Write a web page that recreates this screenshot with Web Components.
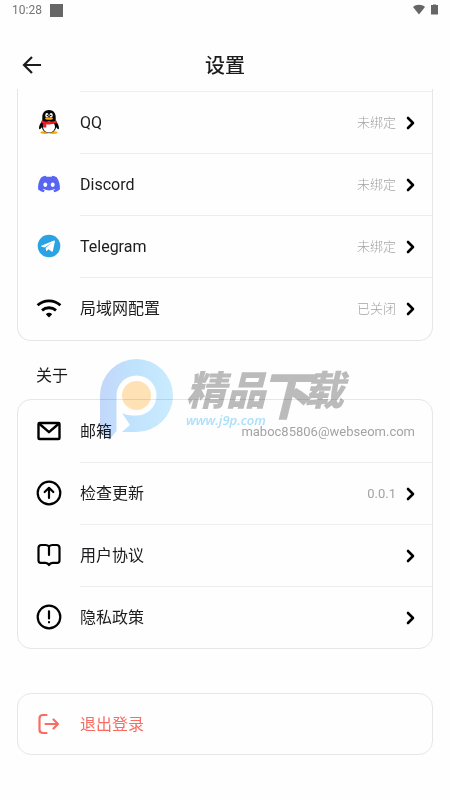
<!DOCTYPE html>
<html lang="zh-CN">
<head>
<meta charset="utf-8">
<meta name="viewport" content="width=device-width, initial-scale=1">
<title>设置</title>
<style>
  html { background: #fefefe; }
  body { margin: 0; color: #1c1c1e; font: 400 16px/24px Roboto, "Noto Sans CJK SC", sans-serif; }
</style>
</head>
<body>
<settings-app>
  <status-bar slot="status">10:28</status-bar>
  <page-header slot="header">设置</page-header>
  <settings-card joined>
    <settings-row icon="qq" value="未绑定">QQ</settings-row>
    <settings-row icon="discord" value="未绑定">Discord</settings-row>
    <settings-row icon="telegram" value="未绑定">Telegram</settings-row>
    <settings-row icon="wifi" value="已关闭">局域网配置</settings-row>
  </settings-card>
  <settings-card heading="关于">
    <settings-row icon="mail" value="maboc85806@webseom.com" readonly>邮箱</settings-row>
    <settings-row icon="update" value="0.0.1">检查更新</settings-row>
    <settings-row icon="book">用户协议</settings-row>
    <settings-row icon="notice">隐私政策</settings-row>
    <brand-stamp slot="overlay"></brand-stamp>
  </settings-card>
  <settings-card apart>
    <settings-row icon="logout" danger>退出登录</settings-row>
  </settings-card>
</settings-app>

<script>
const icons = {
  qq: `<svg viewBox="0 0 26 26">
    <ellipse cx="9" cy="23.6" rx="4.6" ry="1.4" fill="#f5a800"/><ellipse cx="17" cy="23.6" rx="4.6" ry="1.4" fill="#f5a800"/>
    <path d="M13 1C8.600 1 6.300 4.300 6.300 8v3.500C4.500 14 2.800 16.800 3 19.300c.2 1.900 1.500.8 2.700-1C6.700 22 9.300 24 13 24s6.300-2 7.300-5.700c1.200 1.800 2.500 2.900 2.700 1 .2-2.500-1.500-5.300-3.300-7.800V8C19.700 4.300 17.400 1 13 1z" fill="#050505"/>
    <ellipse cx="13" cy="18" rx="6" ry="5.600" fill="#fff"/>
    <ellipse cx="10.900" cy="6.200" rx="1.600" ry="2.300" fill="#fff"/><ellipse cx="15.100" cy="6.200" rx="1.600" ry="2.300" fill="#fff"/>
    <circle cx="11.400" cy="6.500" r=".8"/><circle cx="14.700" cy="6.500" r=".8"/>
    <ellipse cx="13" cy="9.500" rx="4" ry="1.300" fill="#f9aa10"/>
    <path d="M5.800 11.200c4 2.200 10.400 2.200 14.400 0l.6 2.600c-3.300 1.500-7 2-10.500 1.500v3.200H7.100v-4.200l-1.800-.6z" fill="#ed1c24"/>
  </svg>`,
  discord: `<svg viewBox="-2 -5 28 28"><path fill="#5865f2" d="M20.300 1.600A19 19 0 0 0 15.500 0l-.7 1.300a18 18 0 0 0-5.600 0L8.500 0a19 19 0 0 0-4.800 1.600C.7 6.100-.1 10.500.3 14.800a19 19 0 0 0 5.900 3l1.200-2-1.900-1 .5-.3a14 14 0 0 0 12 0l.5.300-1.900 1 1.200 2a19 19 0 0 0 5.900-3c.5-5-.9-9.400-3.400-13.200zM8 12.300c-1.200 0-2.100-1.100-2.100-2.400S6.800 7.500 8 7.500s2.200 1.100 2.100 2.400c0 1.300-.9 2.400-2.100 2.400zm8 0c-1.200 0-2.100-1.100-2.100-2.400s.9-2.400 2.100-2.400 2.200 1.100 2.100 2.400c0 1.300-.9 2.400-2.100 2.400z"/></svg>`,
  telegram: `<svg viewBox="0 0 26 26"><circle cx="13" cy="13" r="11.300" fill="#29a3e3"/><path fill="#fff" d="m5.300 12.700 12.600-5.200c.7-.2 1.100.2 1 .9l-2 9.500c-.2.800-.7 1-1.400.6l-3-2.300-1.600 1.600c-.5.500-.8.300-.9-.3l-.3-2.800L16 9.700l-7.500 4.800-3.100-1c-.7-.2-.7-.6-.1-.8z"/></svg>`,
  wifi: `<svg viewBox="0 0 26 26" fill="none" stroke="#000" stroke-width="2.800"><path d="M1.600 10.300a17 17 0 0 1 22.800 0M6 15.400a10.500 10.500 0 0 1 14 0"/><path d="M9.800 19.200a4.800 4.800 0 0 1 6.400 0L13 22.500z" fill="#000" stroke="none"/></svg>`,
  mail: `<svg viewBox="0 0 26 26" fill="none" stroke="#000" stroke-width="2.400" stroke-linejoin="round"><rect x="2.500" y="5" width="21" height="16" rx="1"/><path d="m3 5.500 10 8.700 10-8.700"/></svg>`,
  update: `<svg viewBox="0 0 26 26" fill="none" stroke="#000" stroke-width="2.200" stroke-linecap="round" stroke-linejoin="round"><circle cx="13" cy="13" r="11.300"/><path d="M13 18V8.500M8.700 12 13 7.800l4.300 4.200"/></svg>`,
  book: `<svg viewBox="0 0 26 26" fill="none" stroke="#000" stroke-width="2.200" stroke-linecap="round" stroke-linejoin="round"><path d="M13 4.500C12 3.300 11 3 9.500 3H5.500C3.500 3 2.500 4 2.500 6v12.500c0 1.500.8 2.300 2.300 2.300h4.700c1.700 0 2.800.8 3.500 2.200.7-1.400 1.800-2.200 3.500-2.200h4.700c1.500 0 2.300-.8 2.300-2.300V6c0-2-1-3-3-3h-4c-1.500 0-2.500.3-3.500 1.500V13"/></svg>`,
  notice: `<svg viewBox="0 0 26 26" fill="none" stroke="#000" stroke-width="2.200" stroke-linecap="round"><circle cx="13" cy="13" r="11.300"/><path d="M13 7.300v7.200M13 18.200v.1"/></svg>`,
  logout: `<svg viewBox="0 0 26 26" fill="none" stroke="#f86c63" stroke-width="2.200" stroke-linecap="round" stroke-linejoin="round"><path d="M10.500 4H7C4.500 4 3.500 5 3.500 7.500v11C3.500 21 4.500 22 7 22h3.500M9.500 13H22M17.500 8.500 22 13l-4.500 4.500"/></svg>`
};

class SettingsApp extends HTMLElement {
  constructor() {
    super();
    this.attachShadow({ mode: 'open' }).innerHTML = `
      <style>
        :host { display: flex; flex-direction: column; min-height: 100vh; }
        main { padding: 0 17px 44px; }
      </style>
      <slot name="status"></slot><slot name="header"></slot><main><slot></slot></main>`;
  }
}

class StatusBar extends HTMLElement {
  constructor() {
    super();
    this.attachShadow({ mode: 'open' }).innerHTML = `
      <style>
        :host { display: flex; align-items: center; gap: 5px; height: 20px; padding: 0 12px; color: #757575; font-size: 12px; line-height: 20px; }
        i { width: 13px; height: 13px; margin-left: 3px; background: #666; }
        svg { display: block; height: 12px; }
        .wifi { width: 14px; margin-left: auto; }
        .battery { width: 7px; }
      </style>
      <slot></slot><i></i>
      <svg class="wifi" viewBox="0 0 14 12"><path fill="#666" d="M1 3C4 0 10 0 13 3L7 10.500z"/></svg>
      <svg class="battery" viewBox="0 0 7 12"><path fill="#aaa" d="M2 0h3v2H2z"/><path fill="#666" d="M0 1h7v9.500H0z"/></svg>`;
  }
}

class PageHeader extends HTMLElement {
  constructor() {
    super();
    this.attachShadow({ mode: 'open' }).innerHTML = `
      <style>
        :host { display: block; padding-top: 21px; }
        header { display: grid; grid-template-columns: 48px 1fr 48px; align-items: center; height: 48px; padding: 0 8px; }
        button { display: grid; place-items: center; height: 48px; padding: 0; border: 0; background: none; cursor: pointer; }
        svg { width: 24px; height: 24px; }
        h1 { margin: 0; padding-top: 2px; text-align: center; font-size: 20px; line-height: 28px; font-weight: 500; }
      </style>
      <header>
        <button type="button" aria-label="返回"><svg viewBox="0 0 24 24" fill="none" stroke="#1c1c1e" stroke-width="2.200"><path d="M21 12H4.500M12 4l-8 8 8 8"/></svg></button>
        <h1><slot></slot></h1>
      </header>`;
  }
}

class SettingsCard extends HTMLElement {
  constructor() {
    super();
    this.attachShadow({ mode: 'open' }).innerHTML = `
      <style>
        :host { display: block; position: relative; }
        :host([apart]) { margin-top: 44px; }
        h2 { margin: 0; padding: 23px 19px 11px; font-size: 16px; line-height: 24px; font-weight: 400; }
        .box { border: 1px solid #e6e6e6; border-radius: 14px; overflow: hidden; }
        :host([joined]) .box { border-top: 0; border-radius: 0 0 14px 14px; padding: 2px 0 1px; }
        :host([joined]) { --first-line: #eee; }
      </style>
      ${this.hasAttribute('heading') ? `<h2>${this.getAttribute('heading')}</h2>` : ''}
      <div class="box"><slot></slot></div><slot name="overlay"></slot>`;
  }
}

class SettingsRow extends HTMLElement {
  constructor() {
    super();
    const readonly = this.hasAttribute('readonly');
    const tag = readonly ? 'div' : 'button type="button"';
    const value = this.getAttribute('value');
    const arrow = !readonly && !this.hasAttribute('danger');
    this.attachShadow({ mode: 'open' }).innerHTML = `
      <style>
        :host { display: block; --line: #eee; --height: 62px; }
        :host(:first-child) { --line: var(--first-line, transparent); }
        .row { display: flex; align-items: center; gap: 18px; box-sizing: border-box; width: 100%; min-height: var(--height); padding: 0 0 0 18px; border: 0; background: none; color: inherit; font: inherit; text-align: left; }
        button { cursor: pointer; }
        .icon svg { display: block; width: 26px; height: 26px; }
        .body { flex: 1; display: flex; align-items: center; gap: 9px; box-sizing: border-box; min-height: var(--height); padding-right: 17px; border-top: 1px solid var(--line); }
        .label { flex: 1; }
        .value { color: #a3a3a3; font-size: 13px; line-height: 16px; font-weight: 300; }
        .value.latin { font-weight: 400; }
        .arrow { display: block; width: 10px; height: 16px; }
        :host([danger]) { color: #f86c63; --height: 60px; }
      </style>
      <${tag} class="row">
        <span class="icon" aria-hidden="true">${icons[this.getAttribute('icon')]}</span>
        <span class="body">
          <span class="label"><slot></slot></span>
          ${value ? `<span class="value${/^[\x20-\x7e]+$/.test(value) ? ' latin' : ''}">${value}</span>` : ''}
          ${arrow ? '<svg class="arrow" viewBox="0 0 10 16" fill="none" stroke="#000" stroke-width="2.600" stroke-linecap="round" stroke-linejoin="round"><path d="m3 3 5 5-5 5"/></svg>' : ''}
        </span>
      </${readonly ? 'div' : 'button'}>`;
  }
}

class BrandStamp extends HTMLElement {
  constructor() {
    super();
    this.attachShadow({ mode: 'open' }).innerHTML = `
      <style>
        :host { position: absolute; left: 82px; top: 18px; display: flex; gap: 11px; pointer-events: none; mix-blend-mode: multiply; }
        svg { width: 76px; height: 82px; }
        .words { padding-top: 11px; white-space: nowrap; }
        b, a { display: block; font-style: italic; }
        b { color: #bcbcbc; font-size: 40px; line-height: 44px; font-weight: 900; }
        big { margin: 0 -7px; font-size: 52px; line-height: 0; vertical-align: -10px; }
        a { color: #ade0fc; font: italic 600 13px/12px "Open Sans", sans-serif; text-decoration: none; }
      </style>
      <svg viewBox="0 0 76 82" aria-hidden="true">
        <defs><linearGradient id="p" x1="0" x2="1" y1=".5" y2=".6"><stop stop-color="#c4d8fc"/><stop offset=".4" stop-color="#c0e3fe"/><stop offset="1" stop-color="#ccedff"/></linearGradient></defs>
        <path fill="url(#p)" d="M37.500 0a36.500 36.500 0 0 1 0 73H23l8-7-8-12c3 2 8 2.500 14.500 2.500a20 20 0 1 0-20-20V72L10 81 1 72V36.500A36.500 36.500 0 0 1 37.500 0z"/>
        <circle cx="37.500" cy="36.500" r="14.500" fill="#ffe2b6"/>
      </svg>
      <div class="words"><b>精品<big>下</big>载</b><a href="#">www.j9p.com</a></div>`;
  }
}

customElements.define('settings-app', SettingsApp);
customElements.define('status-bar', StatusBar);
customElements.define('page-header', PageHeader);
customElements.define('settings-card', SettingsCard);
customElements.define('settings-row', SettingsRow);
customElements.define('brand-stamp', BrandStamp);
</script>
</body>
</html>
